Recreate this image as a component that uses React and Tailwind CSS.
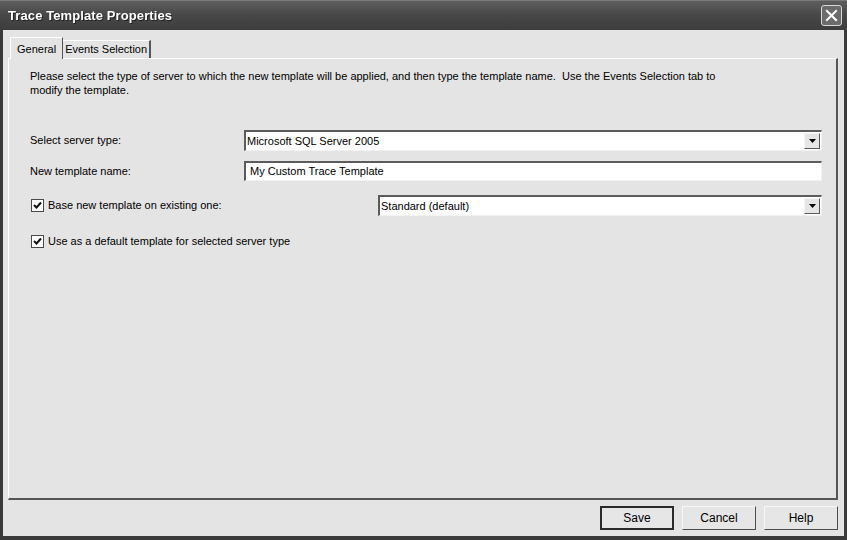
import React from 'react';

// Win XP style "Trace Template Properties" dialog, grayscale screenshot

const Check = () => (
  <span className="w-[13px] h-[13px] border border-[#4a4a4a] bg-white flex items-center justify-center shrink-0">
    <svg width="9" height="9" viewBox="0 0 9 9">
      <path d="M1 4 L3.5 6.5 L8 1.5" fill="none" stroke="#111" strokeWidth="2" />
    </svg>
  </span>
);

const Combo = ({ value, className = '' }) => (
  <div className={`h-[21px] flex items-center bg-white border-t-2 border-l-2 border-t-[#5c5c5c] border-l-[#5c5c5c] border-b border-r border-b-[#f2f2f2] border-r-[#f2f2f2] ${className}`}>
    <div className="flex-1 pl-[1px] truncate">{value}</div>
    <div className="w-[16px] h-[16px] mr-[1px] bg-[#e6e6e6] border border-t-[#f5f5f5] border-l-[#f5f5f5] border-r-[#5a5a5a] border-b-[#5a5a5a] flex items-center justify-center">
      <svg width="7" height="4" viewBox="0 0 7 4">
        <path d="M0 0 H7 L3.5 4 Z" fill="#000" />
      </svg>
    </div>
  </div>
);

const Button = ({ label, isDefault }) => (
  <div
    className={`w-[74px] h-[24px] flex items-center justify-center bg-[#e6e6e6] text-[12px] ${
      isDefault
        ? 'border-2 border-[#2a2a2a]'
        : 'border border-t-[#f7f7f7] border-l-[#f7f7f7] border-r-[#4e4e4e] border-b-[#4e4e4e]'
    }`}
  >
    {label}
  </div>
);

export default function App() {
  return (
    <div className="w-[847px] h-[540px] bg-[#3a3a3a] flex flex-col font-['Liberation_Sans',Arial,sans-serif] text-[11px] text-black">
      <div className="h-[30px] shrink-0 flex items-center justify-between pl-[8px] pr-[5px] bg-linear-to-b from-[#5e5e5e] via-[#474747] to-[#3d3d3d] border-t border-[#7a7a7a]">
        <div className="text-white font-bold text-[13px] tracking-[0.1px] drop-shadow-[1px_1px_0_#222]">Trace Template Properties</div>
        <div className="w-[21px] h-[21px] rounded-[3px] border border-[#d8d8d8] bg-[#6b6b6b] flex items-center justify-center">
          <svg width="13" height="13" viewBox="0 0 13 13">
            <path d="M2 2 L11 11 M11 2 L2 11" stroke="#fff" strokeWidth="2.2" strokeLinecap="square" />
          </svg>
        </div>
      </div>

      <div className="flex-1 mx-[3px] mb-[4px] bg-[#e4e4e4] flex flex-col">
        <div className="flex items-end pt-[7px] pl-[7px] h-[28px] shrink-0">
          <div className="relative z-10 -mb-px h-[22px] px-[6px] flex items-start pt-[3px] bg-[#e4e4e4] border-t border-l border-white border-r border-r-[#555]">
            General
          </div>
          <div className="h-[18px] px-[2px] flex items-center bg-[#e4e4e4] border-t border-white border-r-2 border-r-[#555] text-[11px]">
            Events Selection
          </div>
        </div>

        <div className="flex-1 ml-[5px] mr-[6px] border-t border-l border-white border-r-2 border-b-2 border-r-[#555] border-b-[#555] flex flex-col pl-[21px] pr-[14px]">
          <p className="mt-[10px] leading-[14px]">
            Please select the type of server to which the new template will be applied, and then type the template name.&nbsp; Use the Events Selection tab to
            <br />
            modify the template.
          </p>

          <div className="mt-[33px] flex items-center">
            <div className="w-[214px]">Select server type:</div>
            <Combo value="Microsoft SQL Server 2005" className="flex-1" />
          </div>

          <div className="mt-[10px] flex items-center">
            <div className="w-[214px]">New template name:</div>
            <div className="flex-1 h-[20px] flex items-center pl-[4px] bg-white border-t-2 border-l-2 border-t-[#5c5c5c] border-l-[#5c5c5c] border-b border-r border-b-[#f2f2f2] border-r-[#f2f2f2]">
              My Custom Trace Template
            </div>
          </div>

          <div className="mt-[14px] flex items-center">
            <div className="w-[348px] flex items-center gap-[4px] pl-[1px]">
              <Check />
              <span>Base new template on existing one:</span>
            </div>
            <Combo value="Standard (default)" className="flex-1" />
          </div>

          <div className="mt-[17px] flex items-center gap-[4px] pl-[1px] h-[16px]">
            <Check />
            <span>Use as a default template for selected server type</span>
          </div>
        </div>

        <div className="h-[36px] shrink-0 flex items-center justify-end gap-[8px] mr-[6px]">
          <Button label="Save" isDefault />
          <Button label="Cancel" />
          <Button label="Help" />
        </div>
      </div>
    </div>
  );
}
